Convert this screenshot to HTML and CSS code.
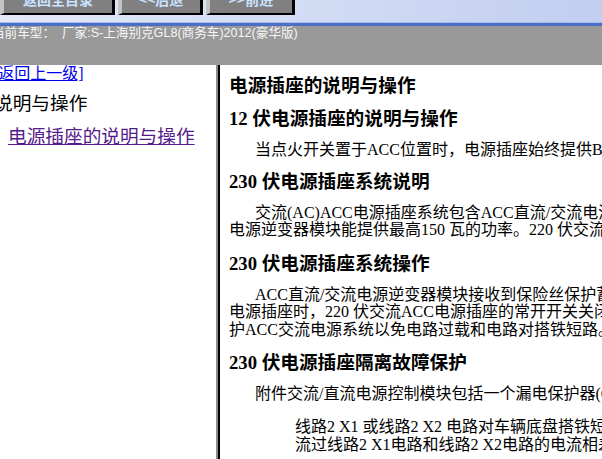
FILE: index.html
```html
<!DOCTYPE html>
<html lang="zh-CN">
<head>
<meta charset="utf-8">
<title>电源插座的说明与操作</title>
<link rel="stylesheet" href="styles.css">
</head>
<body>
<div class="toolbar">
  <div class="btn btn-home">返回全目录</div>
  <div class="btn btn-back">&lt;&lt;后退</div>
  <div class="btn btn-fwd">&gt;&gt;前进</div>
</div>
<div class="rule"></div>
<div class="carbar">当前车型：&nbsp;&nbsp;厂家:S-上海别克GL8(商务车)2012(豪华版)</div>
<div class="main">
  <div class="nav">
    <a class="nav-up" href="#">[返回上一级]</a>
    <div class="nav-title">说明与操作</div>
    <a class="nav-link" href="#">电源插座的说明与操作</a>
  </div>
  <div class="divider"></div>
  <div class="content">
    <h3 class="head">电源插座的说明与操作</h3>
    <h3 class="head">12 伏电源插座的说明与操作</h3>
    <p class="para">当点火开关置于ACC位置时，电源插座始终提供B+电压。</p>
    <h3 class="head">230 伏电源插座系统说明</h3>
    <p class="para multi">交流(AC)ACC电源插座系统包含ACC直流/交流电源逆变器模块和ACC交流电源插座。ACC直流/交流<br>电源逆变器模块能提供最高150 瓦的功率。220 伏交流ACC电源插座位于后排座椅的后部。</p>
    <h3 class="head">230 伏电源插座系统操作</h3>
    <p class="para multi">ACC直流/交流电源逆变器模块接收到保险丝保护蓄电池电压后，当有负载插入<br>电源插座时，220 伏交流ACC电源插座的常开开关关闭，模块输出交流电压。模块可保<br>护ACC交流电源系统以免电路过载和电路对搭铁短路。</p>
    <h3 class="head">230 伏电源插座隔离故障保护</h3>
    <p class="para">附件交流/直流电源控制模块包括一个漏电保护器(GFCI)，在下列情况下切断输出：</p>
    <p class="para sub">线路2 X1 或线路2 X2 电路对车辆底盘搭铁短路。<br>流过线路2 X1电路和线路2 X2电路的电流相差过大。</p>
  </div>
</div>
</body>
</html>
```
FILE: styles.css
```css
html, body {
  margin: 0;
  padding: 0;
  background: #ffffff;
  overflow: hidden;
}

.toolbar {
  height: 22px;
  overflow: hidden;
  display: flex;
  align-items: flex-start;
  gap: 3px;
  background: linear-gradient(to right, #e4e9f8, #d2dcf4 50%, #c2cef0);
}

.btn {
  margin-top: -13px;
  height: 28px;
  box-sizing: border-box;
  padding-bottom: 5px;
  flex: none;
  background: #808080;
  border-left: 4px solid #c4c4c4;
  border-top: 2px solid #c4c4c4;
  border-right: 3px solid #000000;
  border-bottom: 2px solid #000000;
  color: #c8e2ff;
  font: bold 14px "Noto Sans CJK SC", sans-serif;
  display: flex;
  align-items: center;
  justify-content: center;
}

.btn-home { width: 115px; }
.btn-back { width: 85px; }
.btn-fwd { width: 89px; }

.rule {
  height: 3px;
  border-top: 1px solid #a9bbe9;
  background: #4a6fc7;
}

.carbar {
  height: 39px;
  background: #999999;
  color: #f6f6f6;
  font-family: "Liberation Sans", "Noto Sans CJK SC", sans-serif;
  font-size: 12.6px;
  line-height: 15px;
  text-indent: -8px;
  white-space: nowrap;
  overflow: hidden;
}

.main {
  display: flex;
  height: 394px;
}

.nav {
  width: 216px;
  flex: none;
  overflow: hidden;
  white-space: nowrap;
  font-family: "Liberation Serif", "Noto Sans CJK SC", serif;
  color: #000000;
}

.nav-up {
  display: block;
  font-size: 16px;
  line-height: 18px;
  margin-left: -7px;
  color: #0000ee;
}

.nav-title {
  font-size: 18.67px;
  line-height: 22px;
  margin: 10px 0 0 -6px;
}

.nav-link {
  display: inline-block;
  font-size: 18.67px;
  line-height: 22px;
  margin: 11px 0 0 8px;
  color: #551a8b;
  text-decoration: underline;
}

.divider {
  width: 2px;
  flex: none;
  border-left: 2px solid #8c8c8c;
  background: #000000;
}

.content {
  flex: 1;
  min-width: 0;
  padding: 10px 0 0 9px;
  overflow: hidden;
  white-space: nowrap;
  font-family: "Liberation Serif", "Noto Sans CJK SC", serif;
  font-size: 16px;
  color: #000000;
}

.head {
  font-size: 18.67px;
  line-height: 21px;
  font-weight: bold;
  margin: 0 0 12px;
}

.para {
  line-height: 17.5px;
  margin: 0 0 12px;
  text-indent: 26px;
}

.multi {
  margin-bottom: 14px;
}

.sub {
  margin: 15px 0 0 66px;
  line-height: 18px;
  text-indent: 0;
}
```
